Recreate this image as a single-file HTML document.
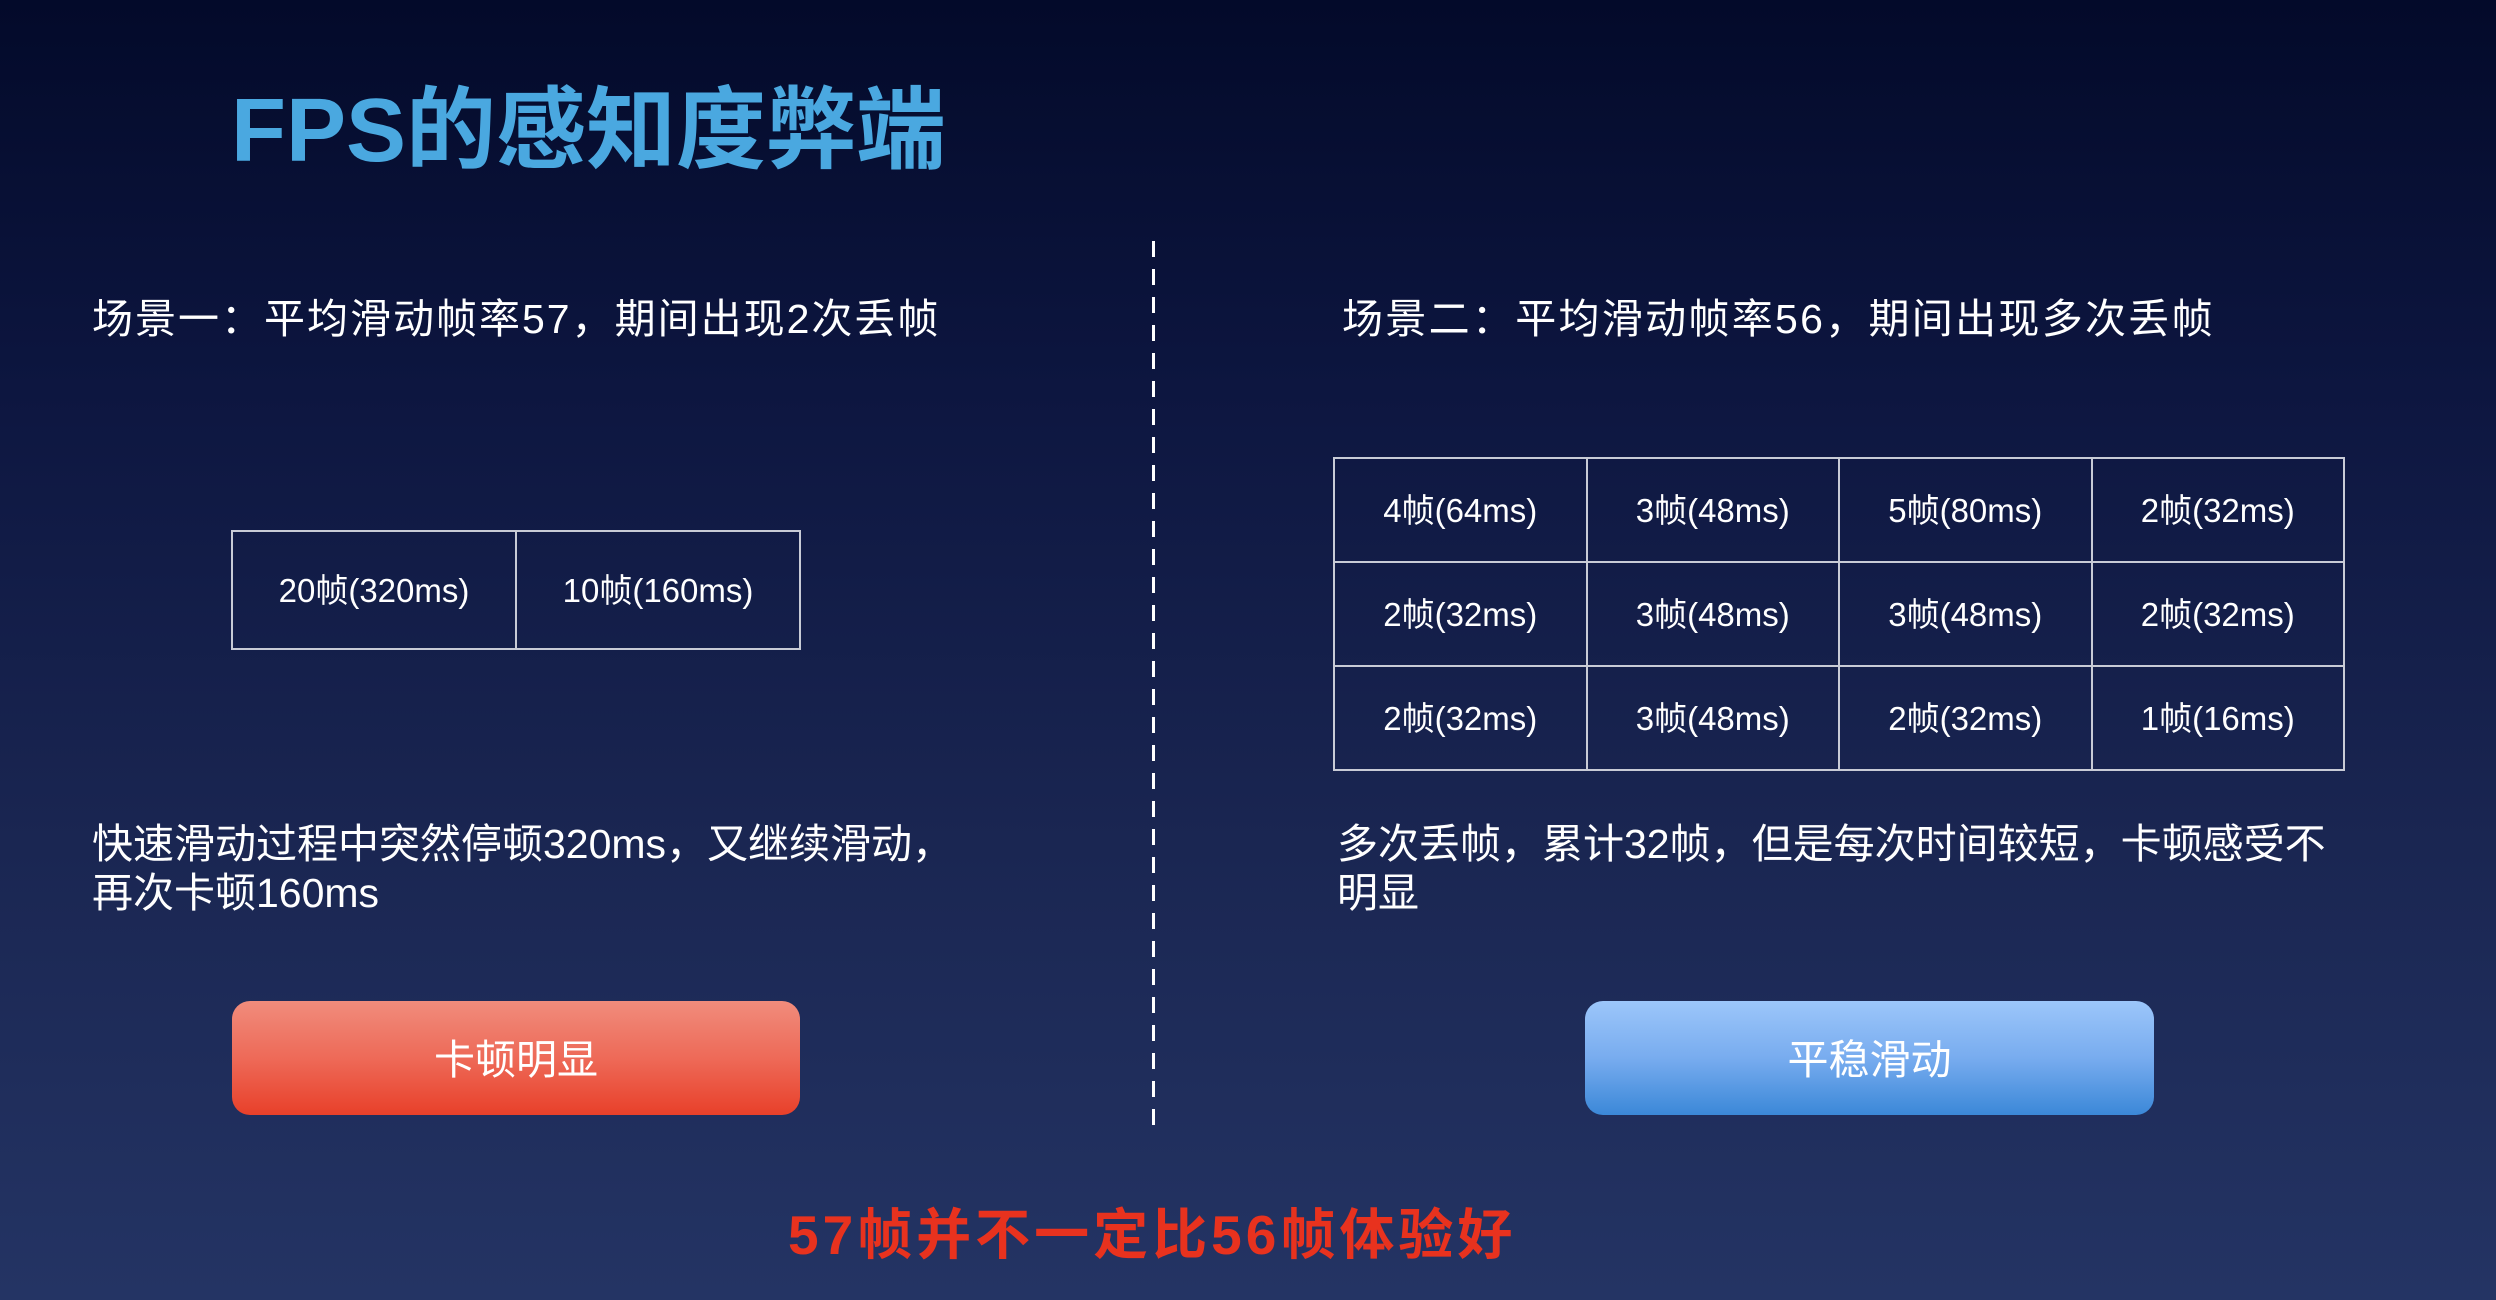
<!DOCTYPE html>
<html><head><meta charset="utf-8"><style>
*{margin:0;padding:0;box-sizing:border-box}
body{width:2496px;height:1300px;overflow:hidden;position:relative;background:linear-gradient(180deg,#030a2a 0%,#0d1640 30%,#1a2652 65%,#243464 100%);font-family:"Liberation Sans","Noto Sans CJK SC",sans-serif;color:#fff}
.a{position:absolute;white-space:nowrap}
.title{left:231px;top:76px;font-size:90px;font-weight:bold;color:#4aa8e0;line-height:110px}
.h{font-size:41px;line-height:50px}
table{position:absolute;border-collapse:collapse}
td{border:2px solid #c8cbd6;text-align:center;font-size:33px;color:#fff;padding-bottom:5px}
.btn{position:absolute;top:1001px;height:114px;border-radius:18px;display:flex;align-items:center;justify-content:center;font-size:41px;color:#fff;padding-bottom:5px}
.dash{position:absolute;left:1152px;top:241px;width:3px;height:891px;background:repeating-linear-gradient(180deg,#fff 0 16px,transparent 16px 28px)}
</style></head><body>
<div class="a title">FPS的感知度弊端</div>
<div class="a h" style="left:92px;top:294px;letter-spacing:2px">场景一：平均滑动帧率57，期间出现2次丢帧</div>
<div class="a h" style="left:1342px;top:294px;letter-spacing:2.3px">场景二：平均滑动帧率56，期间出现多次丢帧</div>
<div class="dash"></div>
<table style="left:231px;top:530px;width:570px;height:120px"><tr><td>20帧(320ms)</td><td>10帧(160ms)</td></tr></table>
<table style="left:1333px;top:457px;width:1012px;height:314px">
<tr><td>4帧(64ms)</td><td>3帧(48ms)</td><td>5帧(80ms)</td><td>2帧(32ms)</td></tr>
<tr><td>2帧(32ms)</td><td>3帧(48ms)</td><td>3帧(48ms)</td><td>2帧(32ms)</td></tr>
<tr><td>2帧(32ms)</td><td>3帧(48ms)</td><td>2帧(32ms)</td><td>1帧(16ms)</td></tr>
</table>
<div class="a h" style="left:92px;top:820px;line-height:49px">快速滑动过程中突然停顿320ms，又继续滑动，<br>再次卡顿160ms</div>
<div class="a h" style="left:1337px;top:820px;line-height:49px">多次丢帧，累计32帧，但是每次时间较短，卡顿感受不<br>明显</div>
<div class="btn" style="left:232px;width:568px;background:linear-gradient(180deg,#f08c7c 0%,#ee6a58 50%,#e8402a 100%)">卡顿明显</div>
<div class="btn" style="left:1585px;width:569px;background:linear-gradient(180deg,#9cc6fa 0%,#78acef 50%,#3b88d8 100%)">平稳滑动</div>
<div class="a" style="left:788px;top:1200px;font-size:55px;font-weight:bold;color:#e8321e;line-height:70px;letter-spacing:4px">57帧并不一定比56帧体验好</div>
</body></html>
